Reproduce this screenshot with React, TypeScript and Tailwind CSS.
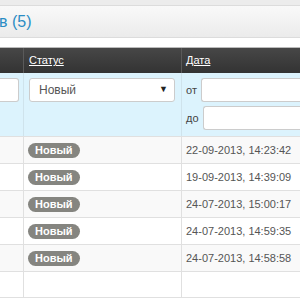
import React from "react";

const rows = [
  "22-09-2013, 14:23:42",
  "19-09-2013, 14:39:09",
  "24-07-2013, 15:00:17",
  "24-07-2013, 14:59:35",
  "24-07-2013, 14:58:58",
];

export default function App() {
  return (
    <div className="w-[300px] h-[300px] overflow-hidden bg-white" style={{ fontFamily: '"Liberation Sans", Arial, sans-serif' }}>
      <div className="h-[5px] bg-[#ececec]" />
      <div className="h-[33px] border-y border-[#dcdcdc] bg-gradient-to-b from-[#f9f9f9] to-[#ebebeb] flex items-center">
        <span className="text-[16px] text-[#2a8cc4] -ml-[1px] leading-none">в (5)</span>
      </div>
      <div className="h-[9px] bg-white" />
      <div className="h-[26px] bg-gradient-to-b from-[#474747] to-[#333333] border-t border-[#bbbbbb] grid grid-cols-[24px_158px_118px] text-[11px]">
        <div className="border-r border-[#5a5a5a]" />
        <div className="border-r border-[#5a5a5a] flex items-center pl-[5px]">
          <span className="text-white underline">Статус</span>
        </div>
        <div className="flex items-center pl-[4px]">
          <span className="text-white underline">Дата</span>
        </div>
      </div>
      <div className="h-[64px] bg-[#dcf3fd] border-b border-[#e0e0e0] grid grid-cols-[24px_158px_118px]">
        <div className="border-r border-[#cfe3ec] pt-[5px]">
          <div className="h-[24px] w-[19px] bg-white border border-[#cccccc] rounded-r-[3px] border-l-0" />
        </div>
        <div className="border-r border-[#cfe3ec] pt-[5px] pl-[5px] pr-[6px]">
          <div className="h-[24px] bg-white border border-[#cccccc] rounded-[3px] flex items-center justify-between pl-[9px] pr-[6px] text-[12px] text-[#555]">
            <span>Новый</span>
            <span className="text-[9px] text-[#222]">▼</span>
          </div>
        </div>
        <div className="pt-[5px] flex flex-col gap-[4px]">
          <div className="flex items-center h-[24px]">
            <span className="w-[19px] pl-[4px] text-[11px] text-[#444]">от</span>
            <div className="flex-1 h-[24px] bg-white border border-[#cccccc] border-r-0 rounded-l-[3px]" />
          </div>
          <div className="flex items-center h-[24px]">
            <span className="w-[21px] pl-[4px] text-[11px] text-[#444]">до</span>
            <div className="flex-1 h-[24px] bg-white border border-[#cccccc] border-r-0 rounded-l-[3px]" />
          </div>
        </div>
      </div>
      {rows.map((d, i) => (
        <div
          key={i}
          className={`h-[27px] border-b border-[#e0e0e0] grid grid-cols-[24px_158px_118px] ${i % 2 === 0 ? "bg-[#f9f9f9]" : "bg-white"}`}
        >
          <div className="border-r border-[#e0e0e0]" />
          <div className="border-r border-[#e0e0e0] flex items-center pl-[4px]">
            <span className="bg-[#858580] text-white font-bold text-[11px] leading-none rounded-full px-[7px] py-[2px]">Новый</span>
          </div>
          <div className="flex items-center pl-[4px] text-[11px] text-[#555] whitespace-nowrap overflow-hidden">{d}</div>
        </div>
      ))}
      <div className="h-[26px] border-b border-[#e0e0e0] grid grid-cols-[24px_158px_118px] bg-white">
        <div className="border-r border-[#e0e0e0]" />
        <div className="border-r border-[#e0e0e0]" />
        <div />
      </div>
    </div>
  );
}
